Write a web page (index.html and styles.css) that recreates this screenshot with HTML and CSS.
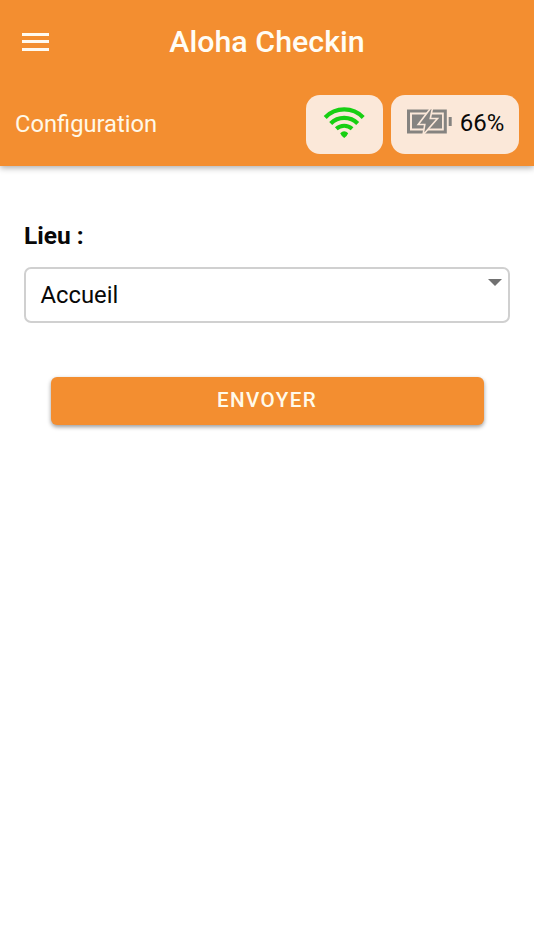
FILE: index.html
```html
<!DOCTYPE html>
<html lang="fr">
<head>
<meta charset="utf-8">
<title>Aloha Checkin</title>
<link rel="stylesheet" href="styles.css">
</head>
<body>
<header class="header">
  <div class="toolbar">
    <button class="menu" aria-label="Menu"><span></span><span></span><span></span></button>
    <h1 class="title">Aloha Checkin</h1>
  </div>
  <div class="subbar">
    <span class="page-name">Configuration</span>
    <div class="chip wifi">
      <svg width="43" height="32" viewBox="0 0 43 32" fill="none" stroke="#17cf12">
        <path d="M2.200 10.500A26.500 26.500 0 0 1 40.200 10.500" stroke-width="4.200"/>
        <path d="M7.700 16.500A19 19 0 0 1 34.700 16.500" stroke-width="4.200"/>
        <path d="M13.300 21.800A11.700 11.700 0 0 1 29.100 21.800" stroke-width="4"/>
        <path d="M17.200 26.300Q21.200 22.300 25.200 26.300Q24.500 28.500 21.200 31Q18 28.500 17.200 26.300Z" fill="#17cf12" stroke="none"/>
      </svg>
    </div>
    <div class="chip battery">
      <svg width="45" height="25" viewBox="0 0 45 25">
        <path d="M1.500 2H38.300V23H1.500Z" fill="none" stroke="#858380" stroke-width="3"/>
        <path d="M5 5.500H35V19.500H5Z" fill="#858380"/>
        <path d="M41.700 8h3v9h-3z" fill="#858380"/>
        <path d="M23.800 -1L11.200 15.500H17.800L16 26L30.500 9.500H23.300L25.500 -1Z" fill="#858380" stroke="#fbe8d9" stroke-width="1.600"/>
      </svg>
      <span>66%</span>
    </div>
  </div>
</header>
<main class="content">
  <label class="label">Lieu :</label>
  <div class="select"><span>Accueil</span><i class="caret"></i></div>
  <button class="submit">ENVOYER</button>
</main>
</body>
</html>
```
FILE: styles.css
```css
* { box-sizing: border-box; }
body { margin: 0; min-height: 100vh; background: #fff; font-family: Roboto, sans-serif; color: #080808; }
.header { height: 166px; background: #f38e30; box-shadow: 0 2px 6px rgba(0,0,0,.32); }
.toolbar { height: 84px; padding-bottom: 1px; display: grid; grid-template-columns: 70px 1fr 70px; align-items: center; }
.menu { border: 0; background: none; padding: 0; margin-left: 22px; width: 27px; display: grid; gap: 4.5px; }
.menu span { height: 3px; background: #fffaf0; }
.title { margin: 0 -2px; padding-top: 1px; text-align: center; color: #fffdf5; font-size: 30.4px; line-height: 36px; font-weight: 500; }
.subbar { display: flex; align-items: center; padding: 11px 15px 0; gap: 8px; }
.page-name { flex: 1; padding-bottom: 2px; color: #fff8e8; font-size: 23.7px; }
.chip { height: 59px; padding-bottom: 4px; border-radius: 14px; background: #fbe8d9; display: flex; align-items: center; justify-content: center; }
.wifi { width: 77px; }
.battery { width: 128px; padding-left: 1px; gap: 8px; font-size: 24px; }
.battery svg { margin-bottom: 2px; }
.content { padding: 54px 24px 20px; display: flex; flex-direction: column; }
.label { font-size: 24.5px; line-height: 31px; font-weight: 700; }
.select { margin-top: 16px; height: 56px; border: 2px solid #d0d0d0; border-radius: 7px; padding: 0 6px 0 14.5px; display: flex; align-items: center; justify-content: space-between; font-size: 23.8px; }
.caret { align-self: flex-start; margin-top: 10px; border: 7.5px solid transparent; border-top-color: #717171; border-bottom: 0; }
.submit { margin: 54px 26.500px 0; height: 48px; padding: 0 0 3px; border: 0; border-radius: 6px; background: #f38e30; color: #fffaea; font: 500 20.6px Roboto, sans-serif; letter-spacing: 1.4px; box-shadow: 0 2px 4px rgba(0,0,0,.4); }
```
